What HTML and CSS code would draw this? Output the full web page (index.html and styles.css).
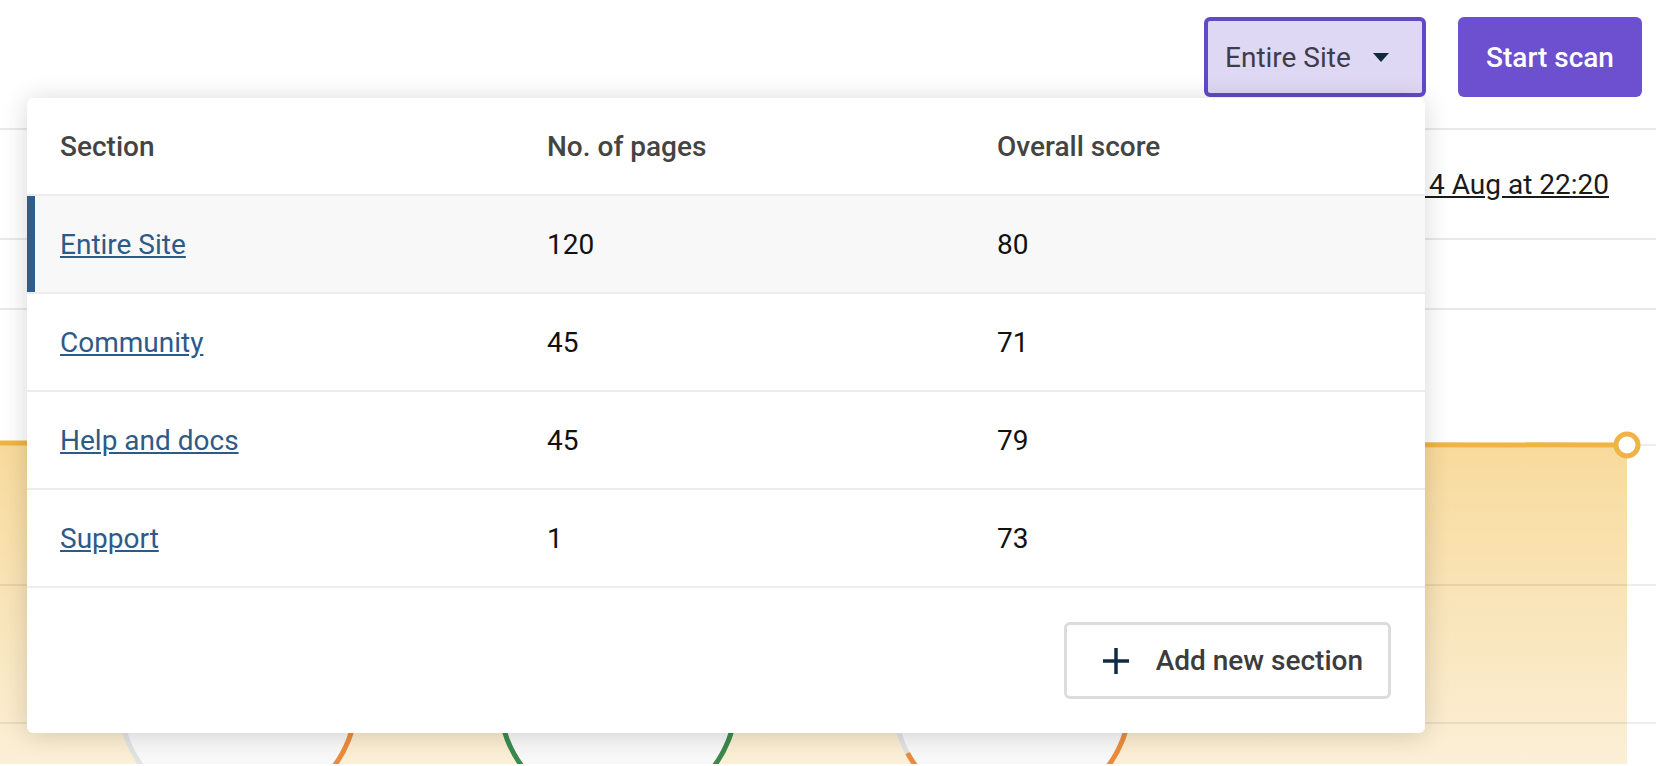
FILE: index.html
```html
<!DOCTYPE html>
<html>
<head>
<title>Site sections</title>
<link rel="stylesheet" href="styles.css">
</head>
<body>
<div class="topbar">
  <div class="scope">
    <button class="scope-btn">Entire Site <span class="caret"></span></button>
    <div class="sections">
      <div class="sec-row sec-head"><span>Section</span><span>No. of pages</span><span>Overall score</span></div>
      <div class="sec-row current"><span><a href="#">Entire Site</a></span><span>120</span><span>80</span></div>
      <div class="sec-row"><span><a href="#">Community</a></span><span>45</span><span>71</span></div>
      <div class="sec-row"><span><a href="#">Help and docs</a></span><span>45</span><span>79</span></div>
      <div class="sec-row"><span><a href="#">Support</a></span><span>1</span><span>73</span></div>
      <div class="sec-foot">
        <button class="add-btn"><svg class="plus" width="28" height="28" viewBox="0 0 28 28"><path d="M14 1v26M1 14h26"/></svg>Add new section</button>
      </div>
    </div>
  </div>
  <button class="scan-btn">Start scan</button>
</div>

<div class="info-row"><span class="last-scan">Last scan <a href="#">Tue 4 Aug at 22:20</a></span></div>
<div class="info-row short"></div>

<svg class="chart" width="1656" height="454" viewBox="0 0 1656 454">
  <defs>
    <linearGradient id="fill" x1="0" y1="0" x2="0" y2="1">
      <stop offset="0" stop-color="#f8da9b"/>
      <stop offset="1" stop-color="#fbefd6"/>
    </linearGradient>
  </defs>
  <rect x="0" y="134" width="1627" height="320" fill="url(#fill)"/>
  <path d="M1627 135H1656M0 275H1656M0 413H1656" stroke="rgba(0,0,0,0.07)" stroke-width="2"/>
  <path d="M0 133L1627 135" stroke="#efb443" stroke-width="5"/>
  <circle cx="1627" cy="135" r="11" fill="#fff" stroke="#efb443" stroke-width="5"/>

  <g class="gauge">
    <circle cx="238" cy="386" r="119" fill="#f8f8f8" stroke="#e2e2e2" stroke-width="5"/>
    <circle cx="238" cy="386" r="119" fill="none" stroke="#ec8b3b" stroke-width="5" stroke-dasharray="411 748" transform="rotate(-90 238 386)"/>
  </g>
  <g class="gauge">
    <circle cx="618" cy="386" r="119" fill="#f8f8f8" stroke="#e2e2e2" stroke-width="5"/>
    <circle cx="618" cy="386" r="119" fill="none" stroke="#3b8a4b" stroke-width="5" stroke-dasharray="613 748" transform="rotate(-90 618 386)"/>
  </g>
  <g class="gauge">
    <circle cx="1012" cy="386" r="119" fill="#f8f8f8" stroke="#e2e2e2" stroke-width="5"/>
    <circle cx="1012" cy="386" r="119" fill="none" stroke="#ec8b3b" stroke-width="5" stroke-dasharray="501 748" transform="rotate(-90 1012 386)"/>
  </g>
</svg>
</body>
</html>
```

FILE: styles.css
```css
/* Scan overview with the section picker open */

body
{ margin: 0;
  font-family: Roboto, "Liberation Sans", sans-serif;
  font-size: 28px;
  color: #1a1a1a;
  background: #fff;
  overflow: hidden;
}

button
{ font: inherit;
  cursor: pointer;
}

div.topbar
{ display: flex;
  justify-content: flex-end;
  align-items: flex-start;
  gap: 32px;
  height: 111px;
  padding: 17px 14px 0 0;
  border-bottom: 2px solid #e9e9e9;
}

div.scope
{ position: relative;
}

button.scope-btn
{ display: flex;
  align-items: center;
  justify-content: space-between;
  box-sizing: border-box;
  width: 222px;
  height: 80px;
  padding: 0 33px 0 17px;
  border: 4px solid #6149c9;
  border-radius: 6px;
  background: #dfd8f5;
  color: #3e3c4a;
}

span.caret
{ width: 0;
  height: 0;
  border-left: 8px solid transparent;
  border-right: 8px solid transparent;
  border-top: 9px solid #0f2a3e;
}

button.scan-btn
{ width: 184px;
  height: 80px;
  border: 0;
  border-radius: 6px;
  background: #6c50d0;
  color: #fff;
  font-weight: 500;
}

/* dropdown panel */

div.sections
{ position: absolute;
  top: 81px;
  right: 1px;
  width: 1398px;
  background: #fff;
  border-radius: 6px;
  box-shadow: 0 2px 26px rgba(0,0,0,0.16);
  z-index: 10;
}

div.sec-row
{ display: grid;
  grid-template-columns: 487px 450px 1fr;
  align-items: center;
  height: 96px;
  padding-left: 33px;
  border-bottom: 2px solid #ececec;
  color: #111;
}

div.sec-head
{ font-weight: 500;
  color: #444;
}

div.current
{ background: #f8f8f8;
  box-shadow: inset 8px 0 0 #2f5d8c;
}

div.sec-row a
{ color: #2e5a88;
}

div.sec-foot
{ display: flex;
  justify-content: flex-end;
  padding: 34px;
}

button.add-btn
{ display: flex;
  align-items: center;
  gap: 26px;
  height: 77px;
  padding: 0 25px 0 35px;
  border: 3px solid #dcdcdc;
  border-radius: 6px;
  background: #fff;
  color: #3c3c3c;
  font-weight: 500;
}

svg.plus path
{ stroke: #102c45;
  stroke-width: 3.5;
  fill: none;
}

/* page behind the panel */

div.info-row
{ display: flex;
  justify-content: flex-end;
  align-items: center;
  height: 108px;
  padding-right: 47px;
  border-bottom: 2px solid #e9e9e9;
}

div.short
{ height: 68px;
}

span.last-scan a
{ color: #1a1a1a;
}

svg.chart
{ display: block;
}
```
